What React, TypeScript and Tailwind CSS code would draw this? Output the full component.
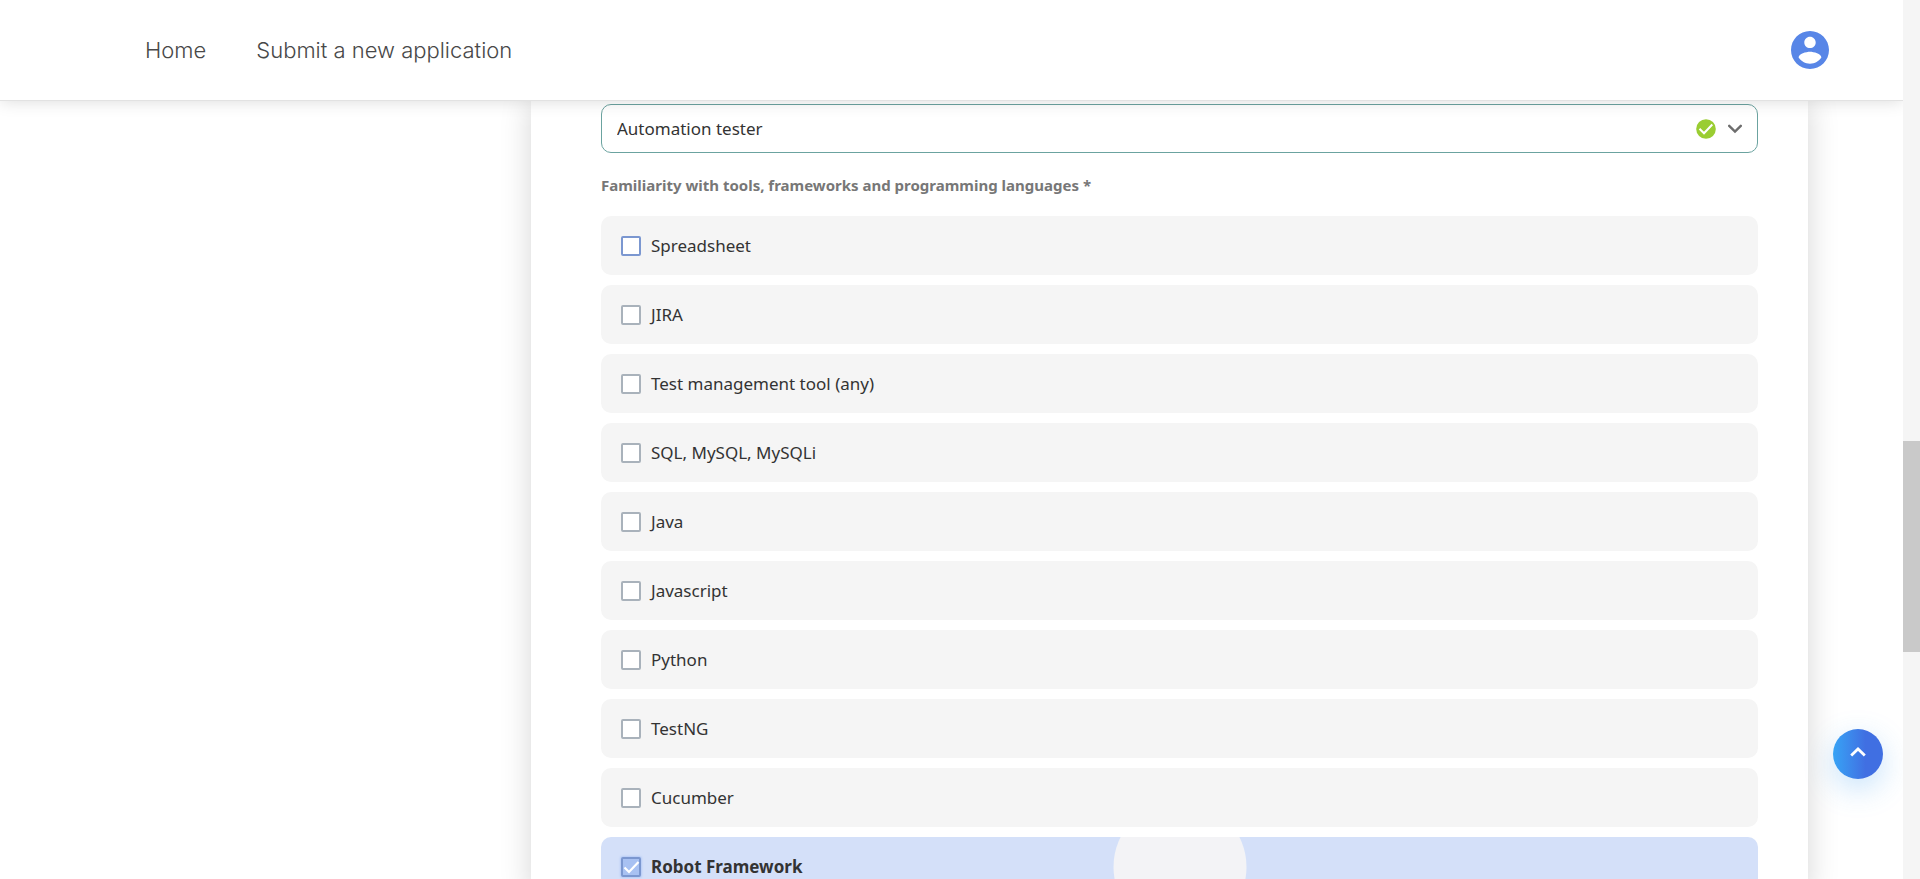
import { useState } from "react";

const tools = [
  "Spreadsheet",
  "JIRA",
  "Test management tool (any)",
  "SQL, MySQL, MySQLi",
  "Java",
  "Javascript",
  "Python",
  "TestNG",
  "Cucumber",
  "Robot Framework",
];

function AccountIcon() {
  return (
    <svg viewBox="2 2 20 20" className="size-[38px]" fill="#5886e7" aria-hidden="true">
      <path d="M12 2C6.48 2 2 6.48 2 12s4.48 10 10 10 10-4.48 10-10S17.52 2 12 2zm0 3c1.66 0 3 1.34 3 3s-1.34 3-3 3-3-1.34-3-3 1.34-3 3-3zm0 14.2c-2.5 0-4.71-1.28-6-3.22.03-1.99 4-3.08 6-3.08 1.99 0 5.97 1.09 6 3.08-1.29 1.94-3.5 3.22-6 3.22z" />
    </svg>
  );
}

function ToolOption({
  name,
  checked,
  focused,
  onToggle,
}: {
  name: string;
  checked: boolean;
  focused: boolean;
  onToggle: () => void;
}) {
  return (
    <label
      className={`relative flex items-center gap-2.5 overflow-hidden rounded-[10px] px-5 py-[15px] leading-[29px] ${
        checked ? "bg-[#d4e0f9] font-bold" : "bg-[#f5f5f5]"
      }`}
    >
      {checked && (
        <span className="absolute top-1/2 left-1/2 size-[133px] -translate-1/2 rounded-full bg-[#f3f3f6]" />
      )}
      <span className="relative grid size-5">
        <input
          type="checkbox"
          checked={checked}
          onChange={onToggle}
          className={`col-start-1 row-start-1 size-5 appearance-none rounded-[2px] border-2 outline-none ${
            checked
              ? "border-[#7b97d0] bg-[#a8c1f2] shadow-[0_0_2px_1px_#b5cbf6]"
              : focused
                ? "border-[#7b97d0] bg-white"
                : "border-[#a9b2bb] bg-white"
          }`}
        />
        {checked && (
          <svg
            viewBox="0 0 20 20"
            className="pointer-events-none z-10 col-start-1 row-start-1 size-5"
            fill="none"
            stroke="#fff"
            strokeWidth="2.2"
            aria-hidden="true"
          >
            <path d="M3.5 10.5l4.5 4.5L17.5 5" />
          </svg>
        )}
      </span>
      <span className="relative">{name}</span>
    </label>
  );
}

export default function App() {
  const [selected, setSelected] = useState<string[]>(["Robot Framework"]);
  const toggle = (name: string) =>
    setSelected((s) => (s.includes(name) ? s.filter((n) => n !== name) : [...s, name]));

  return (
    <div className="flex h-screen overflow-hidden bg-white font-['Noto_Sans',sans-serif] text-[17px] text-[#333]">
      <div className="relative flex min-w-0 flex-1 flex-col">
        <header className="z-20 flex h-[101px] shrink-0 items-center justify-between border-b border-[#e2e2e2] bg-white pr-[74px] pl-[145px] shadow-[0_0_16px_rgba(0,0,0,0.15)]">
          <nav className="flex gap-[50px] font-[Inter,sans-serif] text-[22px] font-light text-[#484848]">
            <a href="#home">Home</a>
            <a href="#apply">Submit a new application</a>
          </nav>
          <button type="button" aria-label="Account">
            <AccountIcon />
          </button>
        </header>

        <main className="min-h-0 flex-1 overflow-hidden pr-[95px] pl-[531px]">
          <form className="min-h-full bg-white pt-[3px] pr-[50px] pl-[70px] shadow-[0_0_29px_rgba(0,0,0,0.17)]">
            <div className="grid items-center">
              <select
                aria-label="Position"
                className="col-start-1 row-start-1 h-[49px] appearance-none rounded-[10px] border border-[#6ba3a0] bg-transparent px-[15px]"
              >
                <option>Automation tester</option>
              </select>
              <span className="pointer-events-none col-start-1 row-start-1 flex items-center gap-3 justify-self-end pr-4">
                <svg viewBox="0 0 20 20" className="size-5" aria-hidden="true">
                  <circle cx="10" cy="10" r="9.8" fill="#9acd32" />
                  <path d="M3.5 9.8l4.5 4.5 8.3-8.8" fill="none" stroke="#fff" strokeWidth="2" />
                </svg>
                <svg viewBox="0 0 14 10" className="h-2.5 w-3.5" aria-hidden="true">
                  <path d="M1.2 1.8L7 7.6l5.8-5.8" fill="none" stroke="#6d6d6d" strokeWidth="2.4" strokeLinecap="round" />
                </svg>
              </span>
            </div>
            <fieldset className="pt-5">
              <legend className="contents">
                <span className="block text-[15px] leading-[25px] font-bold text-[#777]">
                  Familiarity with tools, frameworks and programming languages *
                </span>
              </legend>
              <div className="flex flex-col gap-2.5 pt-[18px]">
                {tools.map((name, i) => (
                  <ToolOption
                    key={name}
                    name={name}
                    focused={i === 0}
                    checked={selected.includes(name)}
                    onToggle={() => toggle(name)}
                  />
                ))}
              </div>
            </fieldset>
          </form>
        </main>

        <button
          type="button"
          aria-label="Back to top"
          className="absolute right-5 bottom-[100px] z-20 grid size-[50px] place-items-center rounded-full bg-linear-to-r from-[#36a3f5] to-[#406fe2] to-65% shadow-[0_10px_30px_rgba(54,153,240,0.28)]"
        >
          <svg viewBox="0 0 16 10" className="mb-1 h-2.5 w-4" aria-hidden="true">
            <path d="M1.2 8.5L8 2l6.8 6.5" fill="none" stroke="#fff" strokeWidth="2.8" />
          </svg>
        </button>
      </div>

      <div className="z-30 flex w-[17px] shrink-0 flex-col bg-[#f5f5f5]" aria-hidden="true">
        <div className="flex-[441]" />
        <div className="flex-[211] bg-[#c9c9c9]" />
        <div className="flex-[227]" />
      </div>
    </div>
  );
}
